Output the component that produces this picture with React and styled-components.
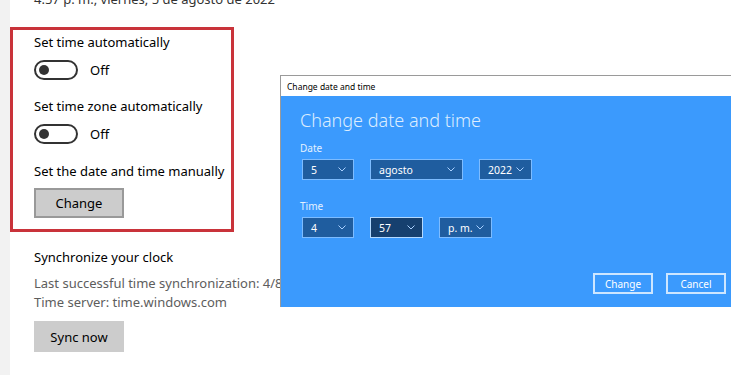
import React from "react";
import styled, { createGlobalStyle } from "styled-components";

const Global = createGlobalStyle`
  html, body { margin: 0; padding: 0; background: #ffffff; }
  body { font-family: "Noto Sans", "Open Sans", sans-serif; color: #000; }
  #root { width: 750px; height: 375px; overflow: hidden; }
`;

const Page = styled.div`
  position: relative;
  display: flex;
  width: 750px;
  height: 375px;
  overflow: hidden;
  background: #fff;
`;

const Strip = styled.div`
  width: 10px;
  flex: none;
  background: #f2f2f2;
`;

const Main = styled.div`
  display: flex;
  flex-direction: column;
  flex: 1;
  min-width: 0;
`;

const DateLine = styled.div`
  margin: -11px 0 0 24px;
  font-size: 13px;
  line-height: 20px;
  color: #333;
  white-space: nowrap;
`;

const Highlight = styled.div`
  margin-top: 18px;
  box-sizing: border-box;
  width: 224px;
  border: 3px solid #c9333a;
  padding: 2px 0 11px 21px;
  display: flex;
  flex-direction: column;
`;

const Label = styled.div`
  font-size: 13px;
  line-height: 20px;
  white-space: nowrap;
  margin-top: ${(p) => p.$gap || 0}px;
`;

const ToggleRow = styled.div`
  display: flex;
  align-items: center;
  gap: 12px;
  margin-top: 8px;
  height: 20px;
`;

const Toggle = styled.div`
  position: relative;
  box-sizing: border-box;
  width: 44px;
  height: 20px;
  border: 2px solid #333;
  border-radius: 10px;
  &::after {
    content: "";
    position: absolute;
    left: 3px;
    top: 3px;
    width: 10px;
    height: 10px;
    border-radius: 50%;
    background: #333;
  }
`;

const ToggleText = styled.span`
  font-size: 13px;
  color: #000;
`;

const GreyButton = styled.button`
  box-sizing: border-box;
  width: 90px;
  height: ${(p) => p.$h}px;
  margin-top: ${(p) => p.$gap}px;
  background: #cccccc;
  border: ${(p) => (p.$outlined ? "2px solid #999" : "none")};
  font-family: inherit;
  font-size: 13px;
  color: #000;
  padding: 0;
`;

const Section = styled.div`
  display: flex;
  flex-direction: column;
  margin: 15px 0 0 24px;
`;

const SubText = styled.div`
  font-size: 13px;
  line-height: 19px;
  color: #5d5d5d;
  white-space: nowrap;
  margin-top: ${(p) => p.$gap || 0}px;
`;

const Dialog = styled.div`
  position: absolute;
  left: 280px;
  top: 75px;
  width: 451px;
  box-sizing: border-box;
  border: 1px solid #9a9a9a;
  border-bottom: none;
  border-right: none;
  display: flex;
  flex-direction: column;
`;

const TitleBar = styled.div`
  height: 20px;
  background: #fff;
  display: flex;
  align-items: center;
  padding-left: 6px;
  font-size: 8.5px;
  color: #000;
`;

const Body = styled.div`
  background: #3b9afd;
  height: 211px;
  box-sizing: border-box;
  padding: 11px 5px 13px 19px;
  display: flex;
  flex-direction: column;
`;

const Heading = styled.div`
  font-size: 18px;
  font-weight: 300;
  line-height: 26px;
  color: #dcedff;
`;

const FieldLabel = styled.div`
  font-size: 10px;
  line-height: 14px;
  color: #e4f1ff;
  margin-top: ${(p) => p.$gap}px;
`;

const Row = styled.div`
  display: flex;
  gap: 16px;
  margin: 4px 0 0 2px;
`;

const Select = styled.div`
  box-sizing: border-box;
  width: ${(p) => p.$w}px;
  height: 21px;
  background: ${(p) => (p.$focus ? "#16406f" : "#1f5d9f")};
  border: 1px solid ${(p) => (p.$focus ? "#b3d9ff" : "#7dbcff")};
  display: flex;
  align-items: center;
  justify-content: space-between;
  padding: 0 7px 0 8px;
  font-size: 10.5px;
  color: #fff;
  white-space: nowrap;
`;

const Chevron = () => (
  <svg width="8" height="5" viewBox="0 0 8 5">
    <polyline points="0.5,0.5 4,4 7.5,0.5" fill="none" stroke="#a9d0ff" strokeWidth="1" />
  </svg>
);

const Actions = styled.div`
  margin-top: auto;
  display: flex;
  justify-content: flex-end;
  gap: 13px;
`;

const DialogButton = styled.button`
  box-sizing: border-box;
  width: 60px;
  height: 21px;
  background: transparent;
  border: 2px solid #cde6ff;
  color: #fff;
  font-family: inherit;
  font-size: 10px;
  padding: 0;
`;

export default function App() {
  return (
    <Page>
      <Global />
      <Strip />
      <Main>
        <DateLine>4:57 p. m., viernes, 5 de agosto de 2022</DateLine>
        <Highlight>
          <Label>Set time automatically</Label>
          <ToggleRow>
            <Toggle />
            <ToggleText>Off</ToggleText>
          </ToggleRow>
          <Label $gap={16}>Set time zone automatically</Label>
          <ToggleRow>
            <Toggle />
            <ToggleText>Off</ToggleText>
          </ToggleRow>
          <Label $gap={17}>Set the date and time manually</Label>
          <GreyButton $h={30} $gap={7} $outlined>Change</GreyButton>
        </Highlight>
        <Section>
          <Label>Synchronize your clock</Label>
          <SubText $gap={7}>Last successful time synchronization: 4/8/2022 4:12:09 p. m.</SubText>
          <SubText>Time server: time.windows.com</SubText>
          <GreyButton $h={31} $gap={9}>Sync now</GreyButton>
        </Section>
      </Main>
      <Dialog>
        <TitleBar>Change date and time</TitleBar>
        <Body>
          <Heading>Change date and time</Heading>
          <FieldLabel $gap={8}>Date</FieldLabel>
          <Row>
            <Select $w={52}>5<Chevron /></Select>
            <Select $w={93}>agosto<Chevron /></Select>
            <Select $w={53}>2022<Chevron /></Select>
          </Row>
          <FieldLabel $gap={19}>Time</FieldLabel>
          <Row>
            <Select $w={52}>4<Chevron /></Select>
            <Select $w={53} $focus>57<Chevron /></Select>
            <Select $w={53}>p. m.<Chevron /></Select>
          </Row>
          <Actions>
            <DialogButton>Change</DialogButton>
            <DialogButton>Cancel</DialogButton>
          </Actions>
        </Body>
      </Dialog>
    </Page>
  );
}
